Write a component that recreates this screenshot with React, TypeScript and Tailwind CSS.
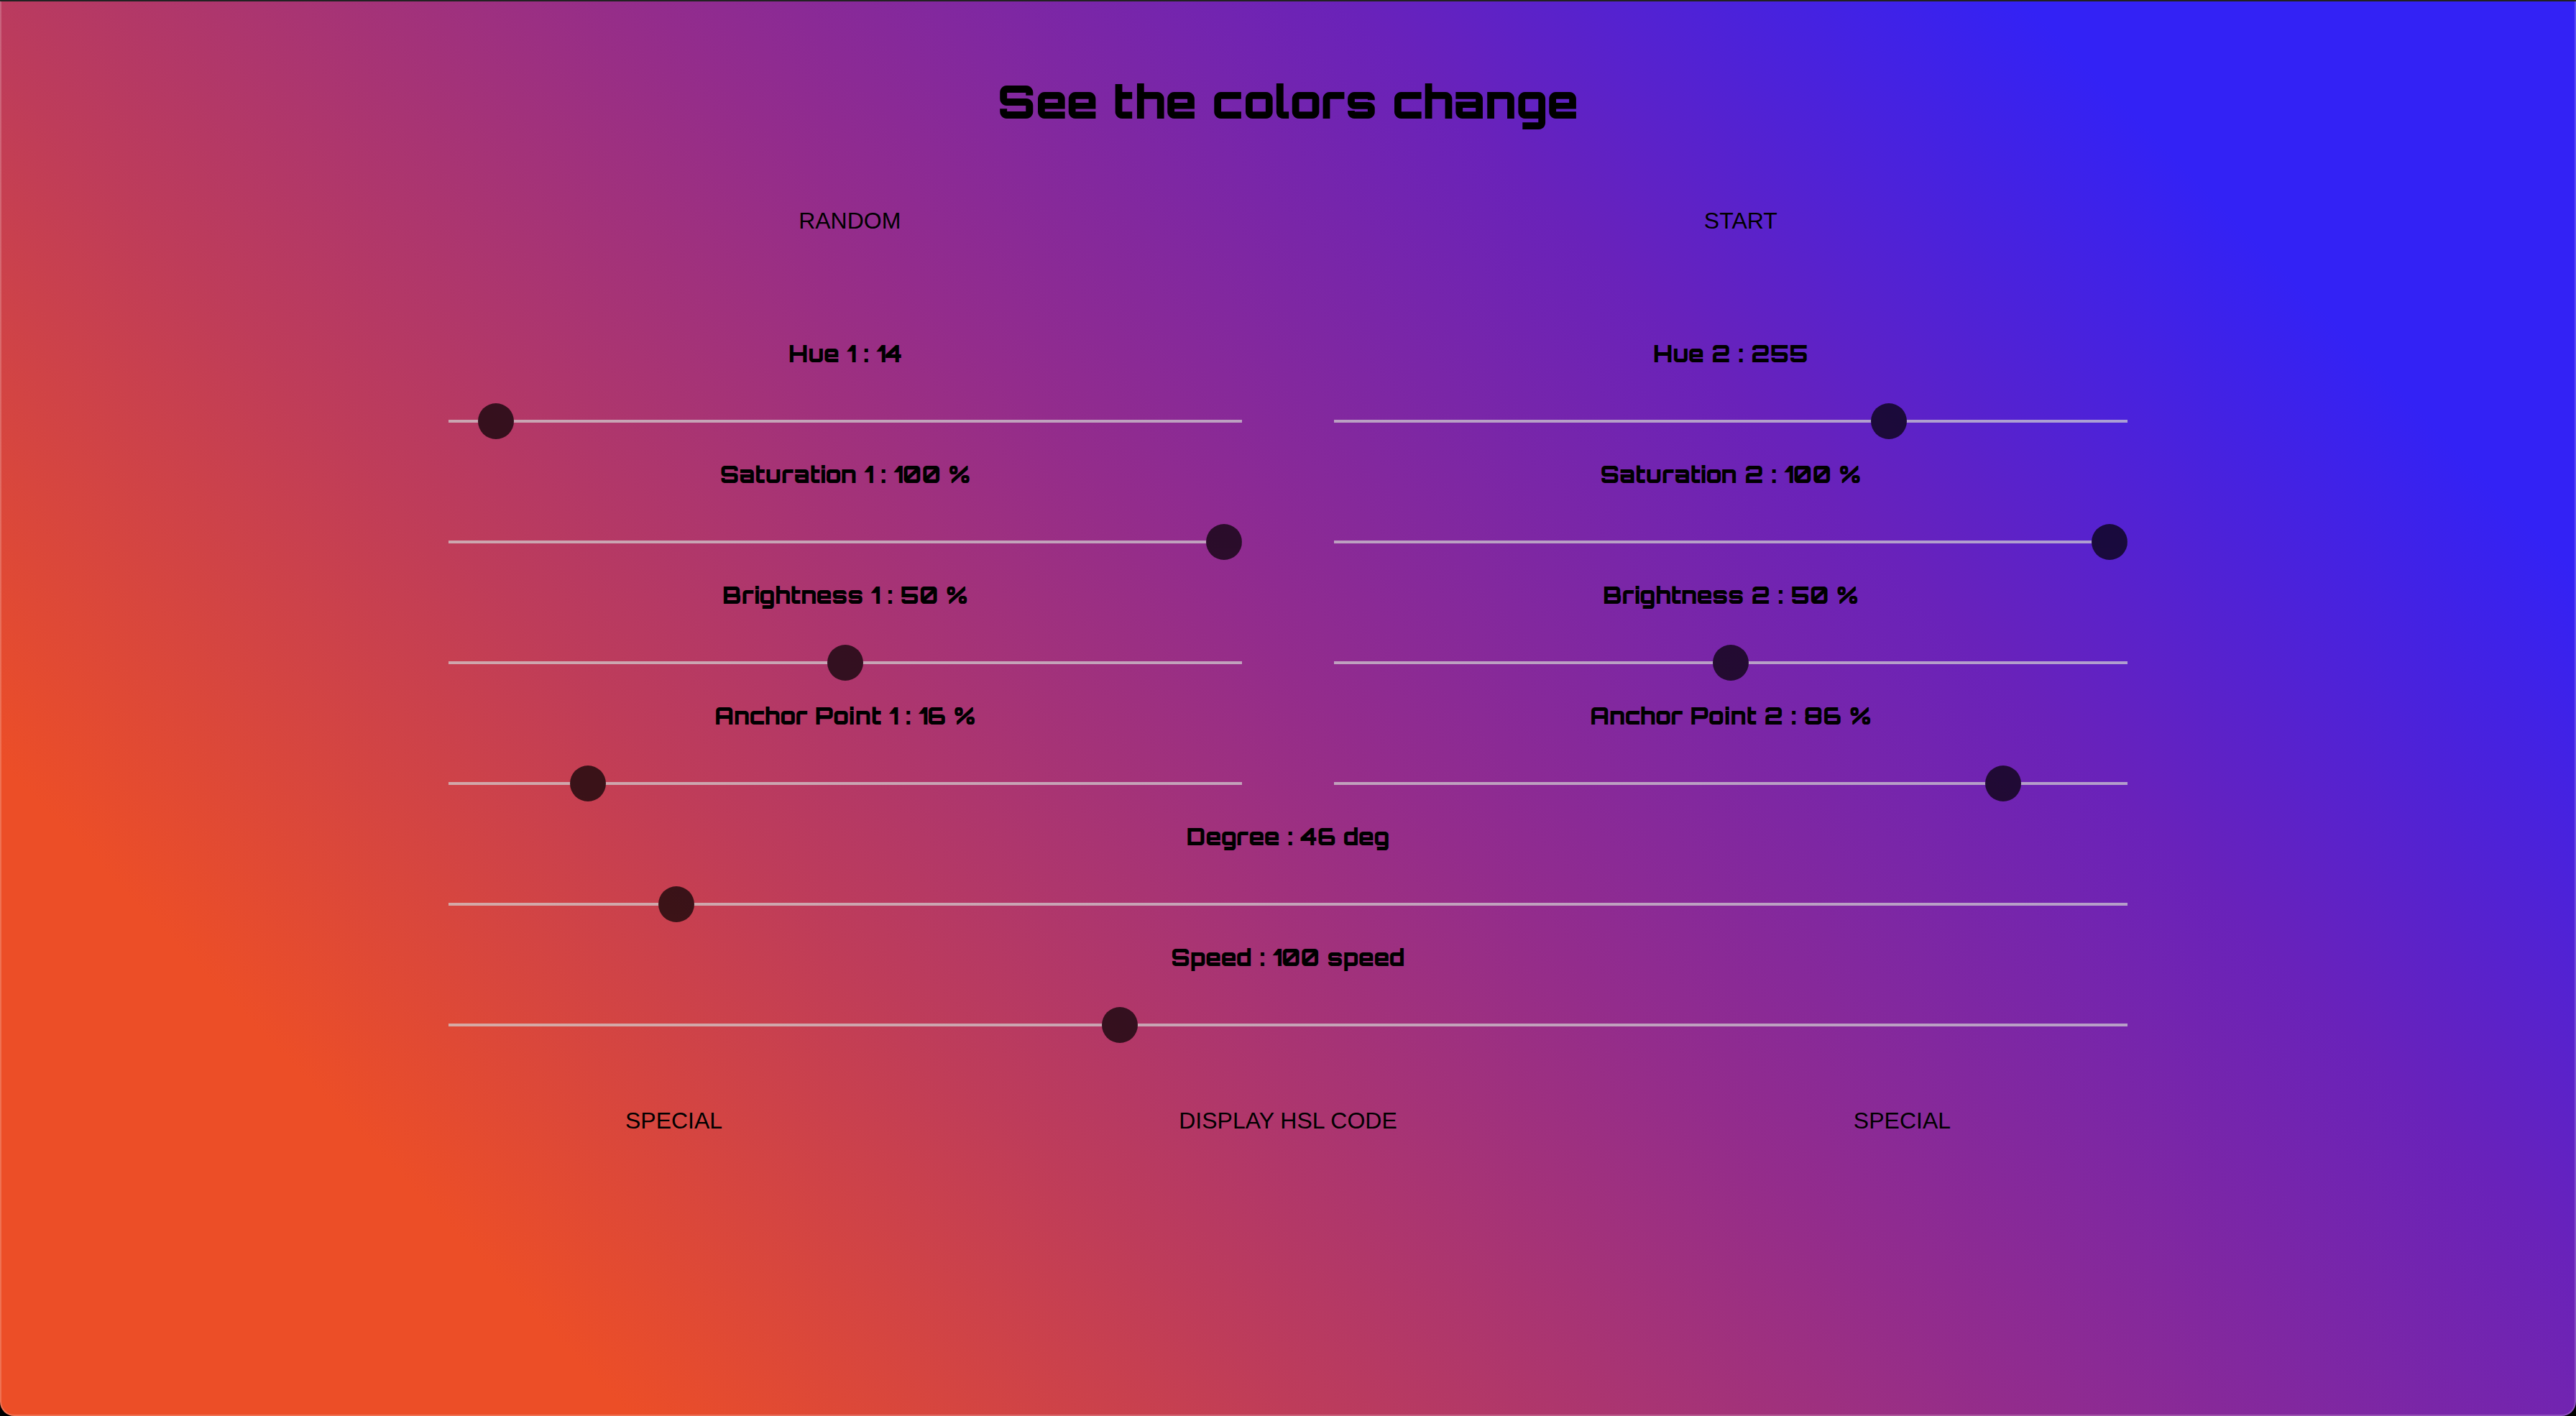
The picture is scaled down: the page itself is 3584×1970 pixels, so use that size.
import { useState } from "react";

type SliderProps = {
  id: string;
  label: string;
  unit?: string;
  min?: number;
  max: number;
  initial: number;
  wide?: boolean;
};

function Slider({ id, label, unit = "", min = 0, max, initial, wide = false }: SliderProps) {
  const [value, setValue] = useState(initial);
  return (
    <div className={wide ? "col-span-2 flex flex-col" : "flex flex-col"}>
      <label
        htmlFor={id}
        className="text-center font-[Orbitron,'DejaVu_Sans',sans-serif] text-[32px] leading-10 font-black whitespace-nowrap"
      >
        {label} : {value}
        {unit && ` ${unit}`}
      </label>
      <input
        id={id}
        type="range"
        min={min}
        max={max}
        value={value}
        onChange={(e) => setValue(Number(e.target.value))}
        className="mt-[72px] mb-[52px] h-1 w-full cursor-pointer appearance-none bg-[#d3d3d3] opacity-70 outline-none hover:opacity-100 [&::-webkit-slider-thumb]:size-[50px] [&::-webkit-slider-thumb]:appearance-none [&::-webkit-slider-thumb]:rounded-full [&::-webkit-slider-thumb]:bg-black"
      />
    </div>
  );
}

function TextButton({ children }: { children: string }) {
  return (
    <button
      type="button"
      className="cursor-pointer font-['Liberation_Sans',Arial,sans-serif] text-[32px] leading-10 uppercase"
    >
      {children}
    </button>
  );
}

export default function App() {
  return (
    <div className="flex min-h-screen flex-col bg-black text-black">
      <main className="flex grow flex-col items-center rounded-b-[20px] border-2 border-white/20 border-t-[#222222] bg-[linear-gradient(46deg,#ec4e27_16%,#be3c5a_33%,#932c8c_51%,#6922ba_69%,#3322f5_86%)] bg-origin-border pt-[107px]">
        <h1 className="text-center font-[Orbitron,'DejaVu_Sans',sans-serif] text-[64px] leading-[64px] font-black">
          See the colors change
        </h1>
        <div className="mt-[114px] flex w-[69.25%] justify-around">
          <TextButton>Random</TextButton>
          <TextButton>Start</TextButton>
        </div>
        <div className="mt-[145px] grid w-[65.25%] grid-cols-2 gap-x-32">
          <Slider id="hue-1" label="Hue 1" max={360} initial={14} />
          <Slider id="hue-2" label="Hue 2" max={360} initial={255} />
          <Slider id="saturation-1" label="Saturation 1" unit="%" max={100} initial={100} />
          <Slider id="saturation-2" label="Saturation 2" unit="%" max={100} initial={100} />
          <Slider id="brightness-1" label="Brightness 1" unit="%" max={100} initial={50} />
          <Slider id="brightness-2" label="Brightness 2" unit="%" max={100} initial={50} />
          <Slider id="anchor-1" label="Anchor Point 1" unit="%" max={100} initial={16} />
          <Slider id="anchor-2" label="Anchor Point 2" unit="%" max={100} initial={86} />
          <Slider id="degree" label="Degree" unit="deg" max={360} initial={46} wide />
          <Slider id="speed" label="Speed" unit="speed" min={1} max={250} initial={100} wide />
        </div>
        <div className="mt-[59px] flex w-[69.25%] justify-around">
          <TextButton>Special</TextButton>
          <TextButton>Display HSL code</TextButton>
          <TextButton>Special</TextButton>
        </div>
      </main>
    </div>
  );
}
